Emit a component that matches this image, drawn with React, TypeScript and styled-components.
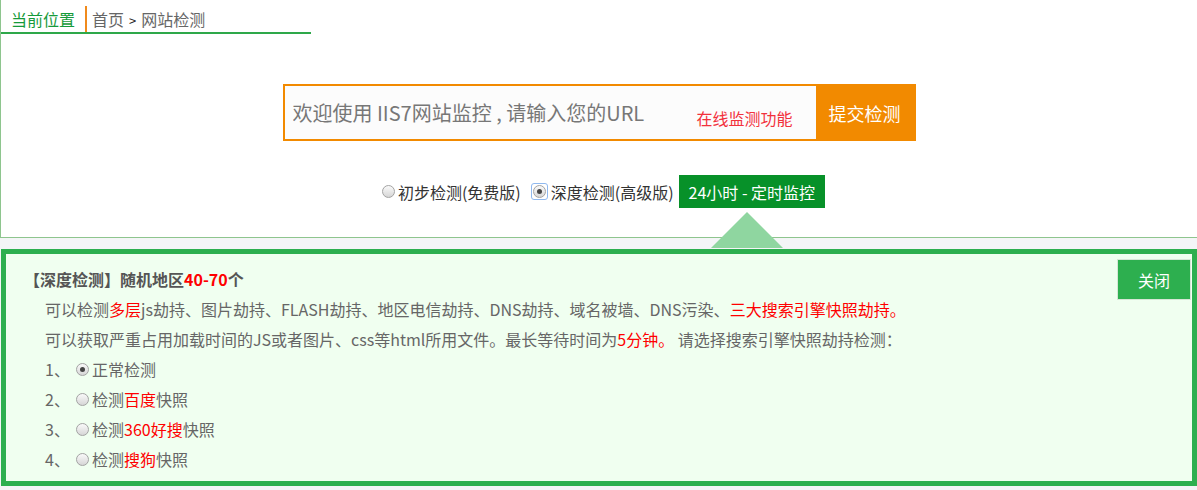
import React from "react";
import styled, { createGlobalStyle } from "styled-components";

const Global = createGlobalStyle`
  html, body { margin: 0; padding: 0; background: #f4f5f7; }
  body {
    width: 1197px;
    height: 490px;
    overflow: hidden;
    font-family: "Noto Sans CJK SC", "Microsoft YaHei", sans-serif;
  }
  * { box-sizing: border-box; }
`;

const TopBox = styled.section`
  background: #fff;
  border-left: 1px solid #8ec58e;
  border-bottom: 1px solid #8ec58e;
  height: 238px;
`;

const Crumbs = styled.nav`
  display: flex;
  align-items: flex-end;
  width: 310px;
  height: 34px;
  border-bottom: 2px solid #2ea84a;
  font-size: 16px;
`;

const CrumbLabel = styled.span`
  height: 26px;
  line-height: 26px;
  padding: 0 10px 0 10px;
  border-right: 2px solid #f08a1c;
  color: #159a3a;
`;

const CrumbPath = styled.span`
  height: 26px;
  line-height: 26px;
  padding-left: 5px;
  color: #666;
`;

const Arrow = styled.span`
  color: #222;
  font-size: 13px;
  margin: 0 5px;
`;

const SearchBar = styled.form`
  display: flex;
  width: 633px;
  height: 57px;
  margin: 50px auto 0;
  border: 2px solid #f28a00;
  background: #fcfcfc;
`;

const Field = styled.input`
  flex: 1;
  min-width: 0;
  border: none;
  outline: none;
  background: transparent;
  padding: 0 0 0 8px;
  font-family: inherit;
  font-size: 20px;
  color: #555;
  &::placeholder { color: #777; }
`;

const Hint = styled.span`
  align-self: center;
  padding-top: 10px;
  margin-right: 23px;
  color: #f2313c;
  font-size: 16px;
  white-space: nowrap;
`;

const Submit = styled.button`
  width: 98px;
  border: none;
  background: #f28a00;
  color: #fff;
  font-family: inherit;
  font-size: 18px;
  padding: 0;
  cursor: pointer;
`;

const Options = styled.div`
  display: flex;
  justify-content: center;
  align-items: center;
  height: 33px;
  margin-top: 34px;
  padding-left: 9px;
`;

const Option = styled.label`
  display: flex;
  align-items: center;
  gap: 3px;
  font-size: 16px;
  color: #333;
  white-space: nowrap;
  & + & { margin-left: 10px; }
`;

const Radio = styled.span<{ $checked?: boolean }>`
  position: relative;
  display: inline-block;
  width: 13px;
  height: 13px;
  border-radius: 50%;
  border: 1px solid #a3a3a3;
  background: linear-gradient(#fafafa, #d6d6d6);
  flex: none;
  &::after {
    content: "";
    display: ${(p) => (p.$checked ? "block" : "none")};
    position: absolute;
    left: 3px;
    top: 3px;
    width: 5px;
    height: 5px;
    border-radius: 50%;
    background: #444;
  }
`;

const Focus = styled.span`
  display: inline-flex;
  padding: 1px;
  border: 1px solid #8fb8ee;
  border-radius: 3px;
`;

const Monitor = styled.button`
  position: relative;
  height: 33px;
  margin-left: 5px;
  padding: 0 10px;
  border: none;
  background: #079129;
  color: #fff;
  font-family: inherit;
  font-size: 16px;
  font-weight: normal;
  white-space: nowrap;
  &::after {
    content: "";
    position: absolute;
    z-index: 2;
    top: 37px;
    left: calc(50% - 41px);
    width: 0;
    height: 0;
    border-left: 36px solid transparent;
    border-right: 36px solid transparent;
    border-bottom: 36px solid #8fd6a0;
  }
`;

const Panel = styled.section`
  position: relative;
  margin: 11px 0 0 1px;
  height: 237px;
  border: 5px solid #2daf4f;
  background: #f0fff0;
  padding: 10px 0 0 18px;
  color: #666;
  font-size: 16px;
`;

const Heading = styled.h3`
  margin: 0;
  font-size: 16px;
  line-height: 30px;
  font-weight: bold;
  color: #555;
`;

const Line = styled.p`
  margin: 0 0 0 21px;
  line-height: 30px;
  white-space: nowrap;
`;

const Item = styled.div`
  display: flex;
  align-items: center;
  height: 30px;
  margin-left: 21px;
`;

const Num = styled.span`
  width: 31px;
`;

const ItemText = styled.span`
  margin-left: 3px;
`;

const Red = styled.span`
  color: #f00;
`;

const Close = styled.button`
  position: absolute;
  top: 5px;
  right: 1px;
  width: 74px;
  height: 41px;
  border: 1px solid #d6e6d6;
  background: #2daf4f;
  color: #fff;
  font-family: inherit;
  font-size: 16px;
  padding: 0;
  cursor: pointer;
`;

const items: { n: number; checked: boolean; pre: string; red: string; post: string }[] = [
  { n: 1, checked: true, pre: "正常检测", red: "", post: "" },
  { n: 2, checked: false, pre: "检测", red: "百度", post: "快照" },
  { n: 3, checked: false, pre: "检测", red: "360好搜", post: "快照" },
  { n: 4, checked: false, pre: "检测", red: "搜狗", post: "快照" },
];

export default function App() {
  return (
    <>
      <Global />
      <TopBox>
        <Crumbs>
          <CrumbLabel>当前位置</CrumbLabel>
          <CrumbPath>
            首页<Arrow>&gt;</Arrow>网站检测
          </CrumbPath>
        </Crumbs>
        <SearchBar onSubmit={(e) => e.preventDefault()}>
          <Field placeholder="欢迎使用 IIS7网站监控 , 请输入您的URL" />
          <Hint>在线监测功能</Hint>
          <Submit type="submit">提交检测</Submit>
        </SearchBar>
        <Options>
          <Option>
            <Radio />
            初步检测(免费版)
          </Option>
          <Option>
            <Focus>
              <Radio $checked />
            </Focus>
            深度检测(高级版)
          </Option>
          <Monitor type="button">24小时 - 定时监控</Monitor>
        </Options>
      </TopBox>
      <Panel>
        <Heading>
          【深度检测】随机地区<Red>40-70</Red>个
        </Heading>
        <Line>
          可以检测<Red>多层</Red>js劫持、图片劫持、FLASH劫持、地区电信劫持、DNS劫持、域名被墙、DNS污染、
          <Red>三大搜索引擎快照劫持。</Red>
        </Line>
        <Line>
          可以获取严重占用加载时间的JS或者图片、css等html所用文件。最长等待时间为<Red>5分钟。</Red> 请选择搜索引擎快照劫持检测：
        </Line>
        {items.map((it) => (
          <Item key={it.n}>
            <Num>{it.n}、</Num>
            <Radio $checked={it.checked} />
            <ItemText>
              {it.pre}
              {it.red && <Red>{it.red}</Red>}
              {it.post}
            </ItemText>
          </Item>
        ))}
        <Close type="button">关闭</Close>
      </Panel>
    </>
  );
}
